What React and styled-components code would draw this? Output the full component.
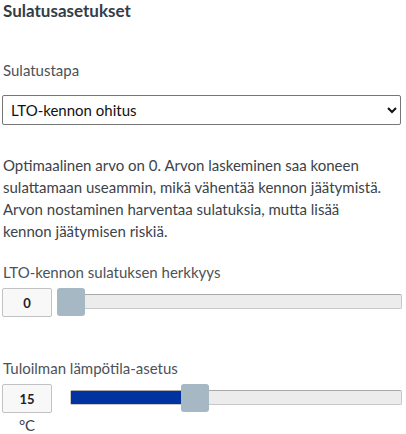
import React from 'react';
import styled, { createGlobalStyle } from 'styled-components';

const GlobalStyle = createGlobalStyle`
  html, body {
    margin: 0;
    padding: 0;
    background: #ffffff;
  }
  body {
    font-family: Lato, "Open Sans", sans-serif;
    color: #3c434a;
  }
`;

const Page = styled.div`
  width: 400px;
  padding: 0 4px 0 2px;
`;

const Heading = styled.h2`
  margin: 0;
  font-size: 17px;
  line-height: 22px;
  font-weight: 700;
  color: #333d47;
  padding-left: 1px;
`;

const Label = styled.label`
  display: block;
  margin-top: ${(p) => p.$top}px;
  font-size: 15px;
  line-height: 22px;
  color: #4a525a;
  padding-left: 1px;
`;

const Select = styled.select`
  display: block;
  width: 399px;
  height: 30px;
  margin-top: 14px;
  padding: 0 4px;
  font-family: Lato, "Open Sans", sans-serif;
  font-size: 15px;
  color: #111;
  background: #fff;
  border: 1px solid #767676;
  border-radius: 2px;
`;

const Help = styled.p`
  margin: 29px 0 0;
  padding-left: 1px;
  font-size: 15px;
  line-height: 22px;
  color: #3c434a;
`;

const SliderRow = styled.div`
  display: flex;
  align-items: flex-start;
  margin-top: 5px;
`;

const ValueCol = styled.div`
  width: 50px;
  display: flex;
  flex-direction: column;
  align-items: center;
`;

const ValueBox = styled.div`
  box-sizing: border-box;
  width: 50px;
  height: 29px;
  display: flex;
  align-items: center;
  justify-content: center;
  background: #f8f8f8;
  border: 1px solid #c2c2c2;
  border-radius: 2px;
  font-size: 13px;
  font-weight: 700;
  color: #222;
`;

const Unit = styled.div`
  margin-top: 2px;
  font-size: 15px;
  line-height: 20px;
  color: #3c434a;
`;

const Track = styled.div`
  position: relative;
  box-sizing: border-box;
  flex: 1;
  height: 15px;
  margin: 6px 0 0 18px;
  background: #ececec;
  border: 1px solid #c8c8c8;
  border-top-color: #a9a9a9;
  border-radius: 2px;
`;

const Fill = styled.div`
  height: 100%;
  background: #0033a0;
`;

const Thumb = styled.div`
  position: absolute;
  top: 50%;
  width: 28px;
  height: 28px;
  margin: -14px 0 0 -14px;
  background: #a6b8c3;
  border-radius: 3px;
`;

function Slider({ value, min, max, unit }) {
  const pct = ((value - min) / (max - min)) * 100;
  return (
    <SliderRow>
      <ValueCol>
        <ValueBox>{value}</ValueBox>
        {unit && <Unit>{unit}</Unit>}
      </ValueCol>
      <Track>
        <Fill style={{ width: `${pct}%` }} />
        <Thumb style={{ left: `${pct}%` }} />
      </Track>
    </SliderRow>
  );
}

export default function App() {
  return (
    <Page>
      <GlobalStyle />
      <Heading>Sulatusasetukset</Heading>
      <Label $top={37}>Sulatustapa</Label>
      <Select defaultValue="ohitus">
        <option value="ohitus">LTO-kennon ohitus</option>
      </Select>
      <Help>
        Optimaalinen arvo on 0. Arvon laskeminen saa koneen
        <br />
        sulattamaan useammin, mikä vähentää kennon jäätymistä.
        <br />
        Arvon nostaminen harventaa sulatuksia, mutta lisää
        <br />
        kennon jäätymisen riskiä.
      </Help>
      <Label $top={19}>LTO-kennon sulatuksen herkkyys</Label>
      <Slider value={0} min={0} max={10} />
      <Label $top={40}>Tuloilman lämpötila-asetus</Label>
      <Slider value={15} min={0} max={40} unit="°C" />
    </Page>
  );
}
